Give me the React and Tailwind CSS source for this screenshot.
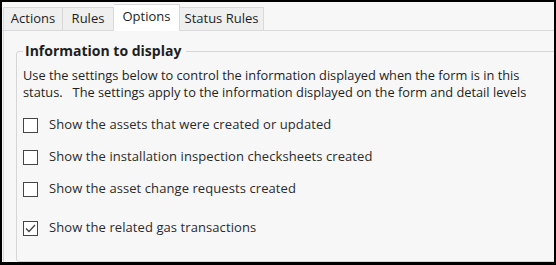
import React from "react";

const font = { fontFamily: '"Open Sans", "Noto Sans", sans-serif' };

function Box({ checked }) {
  return (
    <div className="w-[15px] h-[15px] border border-[#444] bg-white flex items-center justify-center shrink-0">
      {checked && (
        <svg width="11" height="9" viewBox="0 0 11 9">
          <path d="M1 4.5 L4 7.5 L10 1" fill="none" stroke="#444" strokeWidth="1.3" />
        </svg>
      )}
    </div>
  );
}

function Row({ checked, children, className = "" }) {
  return (
    <div className={"flex items-center h-[32px] gap-[11px] " + className}>
      <Box checked={checked} />
      <span className="text-[13px] tracking-[0.08px] text-[#2b2b2b]">{children}</span>
    </div>
  );
}

const tab = "flex items-center justify-center border border-b-0 border-[#d9d9d9] text-[13px] text-[#1e1e1e]";

export default function App() {
  return (
    <div className="w-[556px] h-[265px] bg-black pt-[2px] pl-[2px] pr-[2px] pb-[3px]" style={font}>
      <div className="w-full h-full bg-[#f7f7f7] flex flex-col overflow-hidden">
        <div className="flex items-end h-[29px] pl-[1px] shrink-0 border-b border-[#dadada]">
          <div className={tab + " w-[60px] h-[23px] bg-[#efefef]"}>Actions</div>
          <div className={tab + " w-[51px] h-[23px] border-l-0 bg-[#efefef]"}>Rules</div>
          <div className={tab + " w-[66px] h-[27px] -mb-[1px] pb-[2px] border-l-0 bg-white"}>Options</div>
          <div className={tab + " w-[84px] h-[23px] border-l-0 bg-[#efefef]"}>Status Rules</div>
        </div>
        <div className="flex-1 ml-[1px] border-l border-[#dadada] pl-[12px] pt-[11px] min-h-0">
          <fieldset className="border border-[#d6d6d6] rounded-[3px] w-[560px] h-[220px] pl-[6px] m-0">
            <legend className="pl-[2px] pr-[5px] text-[14px] font-bold text-[#1e1e1e] leading-[18px]">Information to display</legend>
            <div className="mt-[7px] text-[12.8px] leading-[17px] text-[#1e1e1e]">
              <div>Use the settings below to control the information displayed when the form is in this</div>
              <div>status.&nbsp;&nbsp; The settings apply to the information displayed on the form and detail levels</div>
            </div>
            <div className="mt-[8px] flex flex-col">
              <Row>Show the assets that were created or updated</Row>
              <Row>Show the installation inspection checksheets created</Row>
              <Row>Show the asset change requests created</Row>
              <Row checked className="mt-[7px]">Show the related gas transactions</Row>
            </div>
          </fieldset>
        </div>
      </div>
    </div>
  );
}
